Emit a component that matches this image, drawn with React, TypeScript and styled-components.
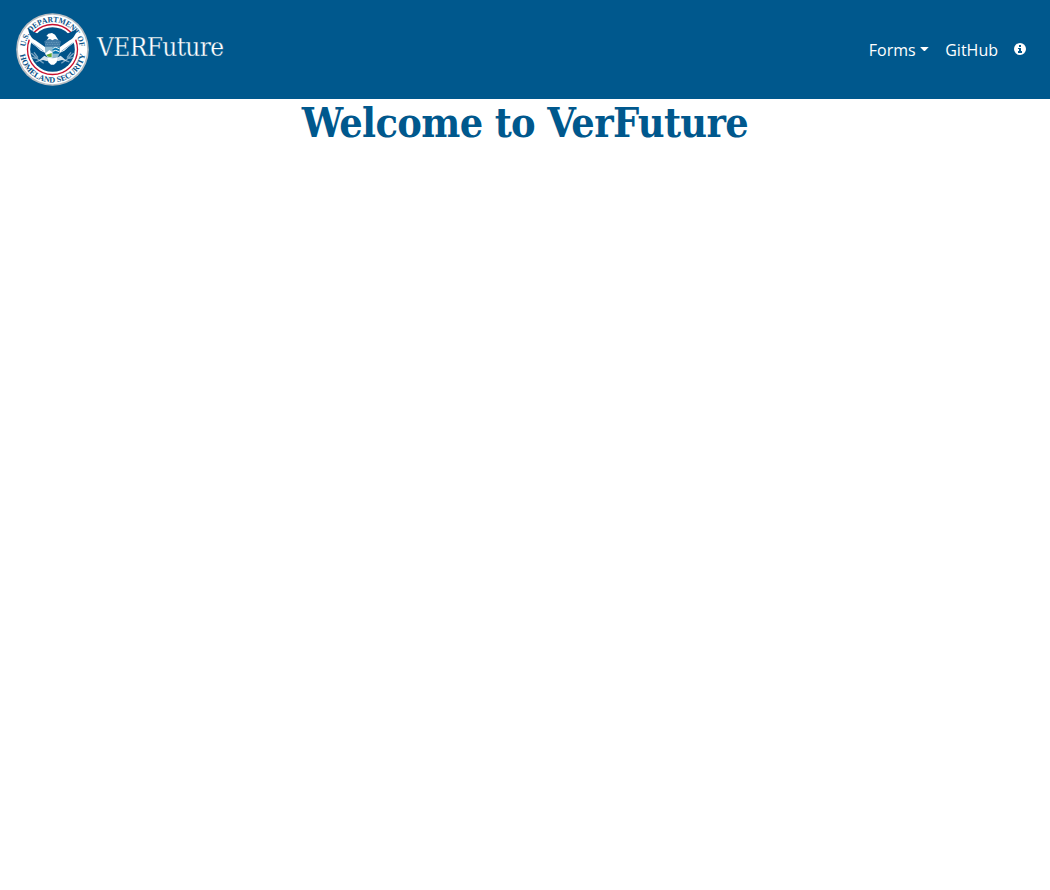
import React from "react";
import styled, { createGlobalStyle } from "styled-components";

const BLUE = "#00588d";

const GlobalStyle = createGlobalStyle`
  *, *::before, *::after { box-sizing: border-box; }
  body {
    margin: 0;
    background: #fff;
    font-family: "Open Sans", "Noto Sans", sans-serif;
    font-size: 16px;
    line-height: 24px;
  }
`;

const Navbar = styled.nav`
  display: flex;
  align-items: center;
  justify-content: space-between;
  height: 99px;
  padding: 0 16px;
  background: ${BLUE};
  color: #fff;
`;

const Brand = styled.a`
  display: flex;
  align-items: center;
  gap: 8px;
  color: inherit;
  text-decoration: none;
`;

const Seal = styled.svg`
  display: block;
  width: 73px;
  height: 73px;
`;

const BrandName = styled.span`
  font-family: "DejaVu Serif Condensed", "DejaVu Serif", serif;
  font-stretch: condensed;
  font-size: 26px;
  line-height: 36px;
  letter-spacing: -0.65px;
  padding-bottom: 6px;
  -webkit-text-stroke: 0.3px ${BLUE};
`;

const NavList = styled.ul`
  display: flex;
  align-items: center;
  margin: 0;
  padding: 0;
  list-style: none;
`;

const NavLink = styled.a`
  display: flex;
  align-items: center;
  height: 40px;
  padding: 0 8px;
  color: inherit;
  text-decoration: none;
`;

const Caret = styled.span`
  width: 9.6px;
  height: 4.8px;
  margin: 0 0 1px 4px;
  background: currentColor;
  clip-path: polygon(0 0, 100% 0, 50% 100%);
`;

const InfoIcon = styled.svg`
  display: block;
  width: 12px;
  height: 12px;
  margin-bottom: 2px;
`;

const Title = styled.h1`
  margin: 0;
  color: ${BLUE};
  font-family: "DejaVu Serif Condensed", "DejaVu Serif", serif;
  font-stretch: condensed;
  font-size: 41px;
  font-weight: 700;
  line-height: 49px;
  letter-spacing: -0.65px;
  text-align: center;
`;

function DepartmentSeal() {
  return (
    <Seal viewBox="18 15 219 219" aria-label="Department seal">
      <defs>
        <path id="upper" d="M45.500 124.500a82 82 0 0 1 164 0" />
        <path id="lower" d="M28.500 124.500a99 99 0 0 0 198 0" />
      </defs>
      <circle cx="127.5" cy="124.5" r="109" fill="#b9bec3" />
      <circle cx="127.5" cy="124.5" r="104" fill="#fff" />
      <circle cx="127.5" cy="124.5" r="75" fill="none" stroke="#c8102e" strokeWidth="4" />
      <circle cx="127.5" cy="124.5" r="67" fill="#005288" />
      <g fill="#fff">
        <path d="M50 66h15l40 38 3 32-16-8-12-11-15-11-12-19z" />
        <path d="M205 66h-15l-40 38-3 32 16-8 12-11 15-11 12-19z" />
      </g>
      <g fill="#005288">
        <path d="M54 61c3 18 10 30 22 36l29 20 6-19-14-18-18-5-17-8z" />
        <path d="M201 61c-3 18-10 30-22 36l-29 20-6-19 14-18 18-5 17-8z" />
      </g>
      <g fill="none" stroke="#5d90b5" strokeWidth="2">
        <path d="M67 105l34 25M188 105l-34 25" />
      </g>
      <path d="M103 100l10-6h29l11 6-4 17h-43z" fill="#3f7aa6" />
      <path d="M108 103h40M106 109h43" stroke="#82abc7" strokeWidth="2" strokeDasharray="3 2" />
      <path d="M111 96l5-9-7-3 6-7 11-2 9 5 10 16-10-3-8 4-7-4z" fill="#fff" />
      <path d="M106 116h43v20q-5 16-21.500 21q-16.500-5-21.500-21z" fill="#8eb9ce" />
      <path d="M128 117h20v20h-20z" fill="#0876ad" />
      <path d="M128 121l9-3 11 4M128 130l9-3 11 4" fill="none" stroke="#fff" strokeWidth="3" />
      <path d="M105 137l13-11 9 6v17q-14 1-22-12z" fill="#fff" />
      <path d="M108 141l17-6v13q-11 0-17-7z" fill="#5eab35" />
      <g fill="none" stroke="#7ba5c3" strokeWidth="4">
        <path d="M64 136l19 17 18 13M66 149l17 3M77 162l10-4M72 133l12 16" />
        <path d="M191 136l-19 17-18 13M189 149l-17 3M178 162l-10-4M183 133l-12 16" />
      </g>
      <path d="M103 143l-19 17 15-4 13 4 8-8M152 143l19 17-15-4-13 4-8-8" fill="#d6e3ec" />
      <path d="M112 148q15 6 31 0l-3 15-8 7h-9l-8-7z" fill="#fff" />
      <g fill="#075187" fontFamily="Liberation Serif, serif" fontWeight="700" fontSize="24">
        <text>
          <textPath href="#upper" startOffset="8" textLength="242" lengthAdjust="spacingAndGlyphs">U.S. DEPARTMENT OF</textPath>
        </text>
        <text>
          <textPath href="#lower" startOffset="16" textLength="280" lengthAdjust="spacingAndGlyphs">HOMELAND SECURITY</textPath>
        </text>
      </g>
    </Seal>
  );
}

export default function App() {
  return (
    <>
      <GlobalStyle />
      <Navbar>
        <Brand href="#">
          <DepartmentSeal />
          <BrandName>VERFuture</BrandName>
        </Brand>
        <NavList>
          <li><NavLink href="#">Forms<Caret /></NavLink></li>
          <li><NavLink href="#">GitHub</NavLink></li>
          <li>
            <NavLink href="#" aria-label="Information">
              <InfoIcon viewBox="0 0 12 12">
                <circle cx="6" cy="6" r="6" fill="#fff" />
                <path d="M5 2h2v2H5zM4 5h3v3h1v2H4V8h1V6H4z" fill={BLUE} />
              </InfoIcon>
            </NavLink>
          </li>
        </NavList>
      </Navbar>
      <Title>Welcome to VerFuture</Title>
    </>
  );
}
